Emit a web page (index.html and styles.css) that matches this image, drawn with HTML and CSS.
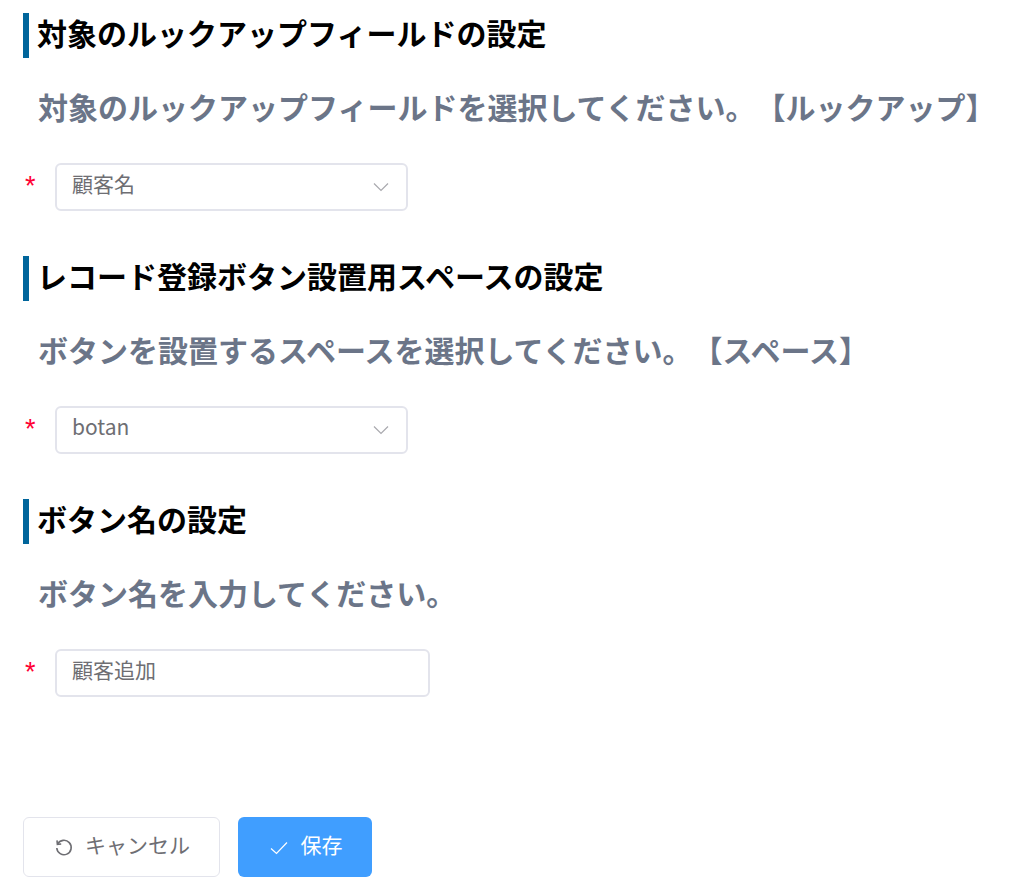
FILE: index.html
```html
<!DOCTYPE html>
<html lang="ja">
<head>
<meta charset="UTF-8">
<title>設定</title>
<link rel="stylesheet" href="styles.css">
</head>
<body>
  <form class="config">
    <!-- lookup field -->
    <section class="block">
      <h2 class="block-title">対象のルックアップフィールドの設定</h2>
      <p class="block-desc">対象のルックアップフィールドを選択してください。【ルックアップ】</p>
      <div class="row">
        <span class="req">*</span>
        <div class="select">
          <span class="value">顧客名</span>
          <svg class="chevron" viewBox="0 0 16 10"><path d="M1 1.5 8 8.5 15 1.5"/></svg>
        </div>
      </div>
    </section>

    <!-- space for the button -->
    <section class="block">
      <h2 class="block-title">レコード登録ボタン設置用スペースの設定</h2>
      <p class="block-desc">ボタンを設置するスペースを選択してください。【スペース】</p>
      <div class="row">
        <span class="req">*</span>
        <div class="select">
          <span class="value">botan</span>
          <svg class="chevron" viewBox="0 0 16 10"><path d="M1 1.5 8 8.5 15 1.5"/></svg>
        </div>
      </div>
    </section>

    <!-- button name -->
    <section class="block">
      <h2 class="block-title">ボタン名の設定</h2>
      <p class="block-desc">ボタン名を入力してください。</p>
      <div class="row">
        <span class="req">*</span>
        <div class="text-input"><span class="value">顧客追加</span></div>
      </div>
    </section>

    <div class="actions">
      <button type="button" class="btn btn-cancel">
        <svg class="btn-icon" viewBox="0 0 18 18"><path d="M2.6 5.2A7.2 7.2 0 1 1 1.8 9"/><path d="M2 1.4 2.4 5.4 6.2 5"/></svg>
        キャンセル
      </button>
      <button type="button" class="btn btn-save">
        <svg class="btn-icon" viewBox="0 0 18 14"><path d="M1 7.5 6.5 12.5 17 1.5"/></svg>
        保存
      </button>
    </div>
  </form>
</body>
</html>
```

FILE: styles.css
```css
body{
  margin:0;
  background:#fff;
  font-family:"Noto Sans CJK JP","Noto Sans",sans-serif;
  text-spacing-trim:space-all;
}
.config{padding:13px 0 0 23px;}
.block{height:243px;}
.block-title{
  margin:0;
  height:45px;
  line-height:38px;
  padding-left:8px;
  border-left:6px solid #00659b;
  font-size:30px;
  font-weight:700;
  color:#000;
}
.block-desc{
  margin:0;
  padding:26px 0 0 15px;
  line-height:44px;
  font-size:30px;
  font-weight:700;
  color:#6b7588;
  white-space:nowrap;
}
.row{display:flex;align-items:flex-start;margin-top:35px;}
.req{
  width:30px;
  padding-left:2px;
  color:#ff0033;
  font-family:"Liberation Sans",sans-serif;
  font-size:27px;
  line-height:46px;
}
.select,.text-input{
  box-sizing:border-box;
  height:48px;
  display:flex;
  align-items:center;
  padding:0 15px;
  border:2px solid #e3e4ec;
  border-radius:6px;
  background:#fff;
}
.select{width:353px;justify-content:space-between;}
.text-input{width:375px;}
.value{font-size:21px;line-height:40px;margin-top:-9px;color:#6e6e73;}
.chevron{width:16px;height:10px;margin-right:2px;fill:none;stroke:#a9a9ae;stroke-width:1.2;}
.actions{display:flex;gap:18px;margin-top:75px;}
.btn{
  box-sizing:border-box;
  height:60px;
  display:flex;
  align-items:center;
  justify-content:center;
  gap:12px;
  border-radius:6px;
  font-family:inherit;
  font-size:21px;
  line-height:40px;
  padding:0 0 6px 2px;
}
.btn-cancel{width:197px;background:#fff;border:1.5px solid #e3e4ec;color:#6e6e73;}
.btn-save{width:134px;background:#409eff;border:0;color:#fff;}
.btn-icon{fill:none;margin-top:7px;stroke-width:1.6;}
.btn-cancel .btn-icon{width:18px;height:18px;stroke:#6e6e73;}
.btn-save .btn-icon{width:18px;height:14px;margin-right:1px;stroke:#fff;stroke-width:1.2;}
```
